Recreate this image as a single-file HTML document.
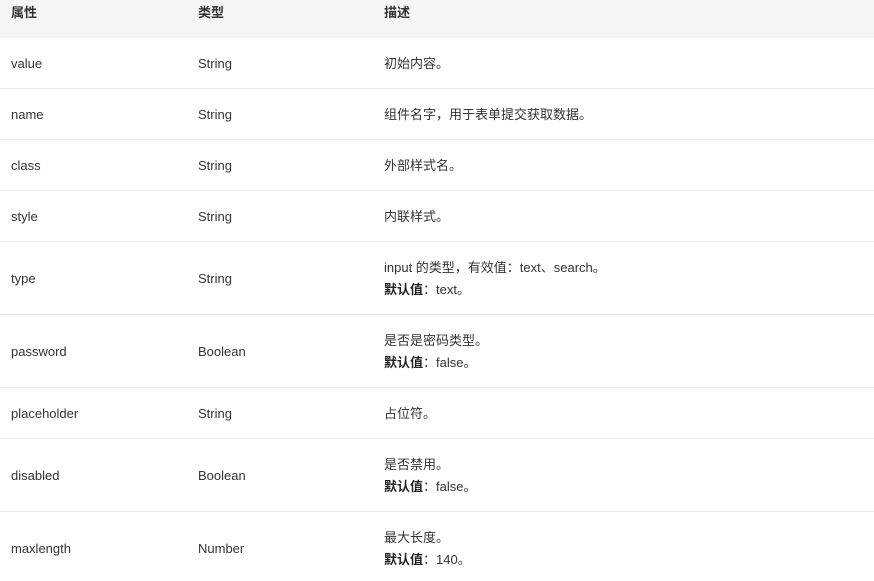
<!DOCTYPE html>
<html><head><meta charset="utf-8"><style>
html,body{margin:0;padding:0;background:#fff;width:874px;height:581px;overflow:hidden}
body{font-family:"Liberation Sans","Noto Sans CJK SC",sans-serif;font-size:13px;color:#333}
table{border-collapse:collapse;width:874px;table-layout:fixed}
th{background:#f5f5f5;height:38px;text-align:left;font-weight:bold;padding:0;vertical-align:top;line-height:26px}
td{padding:1px 0 0 0;border-bottom:1px solid #e8e8e8;vertical-align:middle;line-height:22px}
tr.s td{height:49px}
tr.d td{height:71px}
th.c1,td.c1,th.c2,td.c2,th.c3,td.c3{padding-left:11px}
b{font-weight:bold;color:#222}
</style></head><body>
<table>
<colgroup><col style="width:187px"><col style="width:186px"><col></colgroup>
<tr><th class="c1">属性</th><th class="c2">类型</th><th class="c3">描述</th></tr>
<tr class="s"><td class="c1">value</td><td class="c2">String</td><td class="c3">初始内容。</td></tr>
<tr class="s"><td class="c1">name</td><td class="c2">String</td><td class="c3">组件名字，用于表单提交获取数据。</td></tr>
<tr class="s"><td class="c1">class</td><td class="c2">String</td><td class="c3">外部样式名。</td></tr>
<tr class="s"><td class="c1">style</td><td class="c2">String</td><td class="c3">内联样式。</td></tr>
<tr class="d"><td class="c1">type</td><td class="c2">String</td><td class="c3">input 的类型，有效值：text、search。<br><b>默认值</b>：text。</td></tr>
<tr class="d"><td class="c1">password</td><td class="c2">Boolean</td><td class="c3">是否是密码类型。<br><b>默认值</b>：false。</td></tr>
<tr class="s"><td class="c1">placeholder</td><td class="c2">String</td><td class="c3">占位符。</td></tr>
<tr class="d"><td class="c1">disabled</td><td class="c2">Boolean</td><td class="c3">是否禁用。<br><b>默认值</b>：false。</td></tr>
<tr class="d"><td class="c1">maxlength</td><td class="c2">Number</td><td class="c3">最大长度。<br><b>默认值</b>：140。</td></tr>
</table>
</body></html>
